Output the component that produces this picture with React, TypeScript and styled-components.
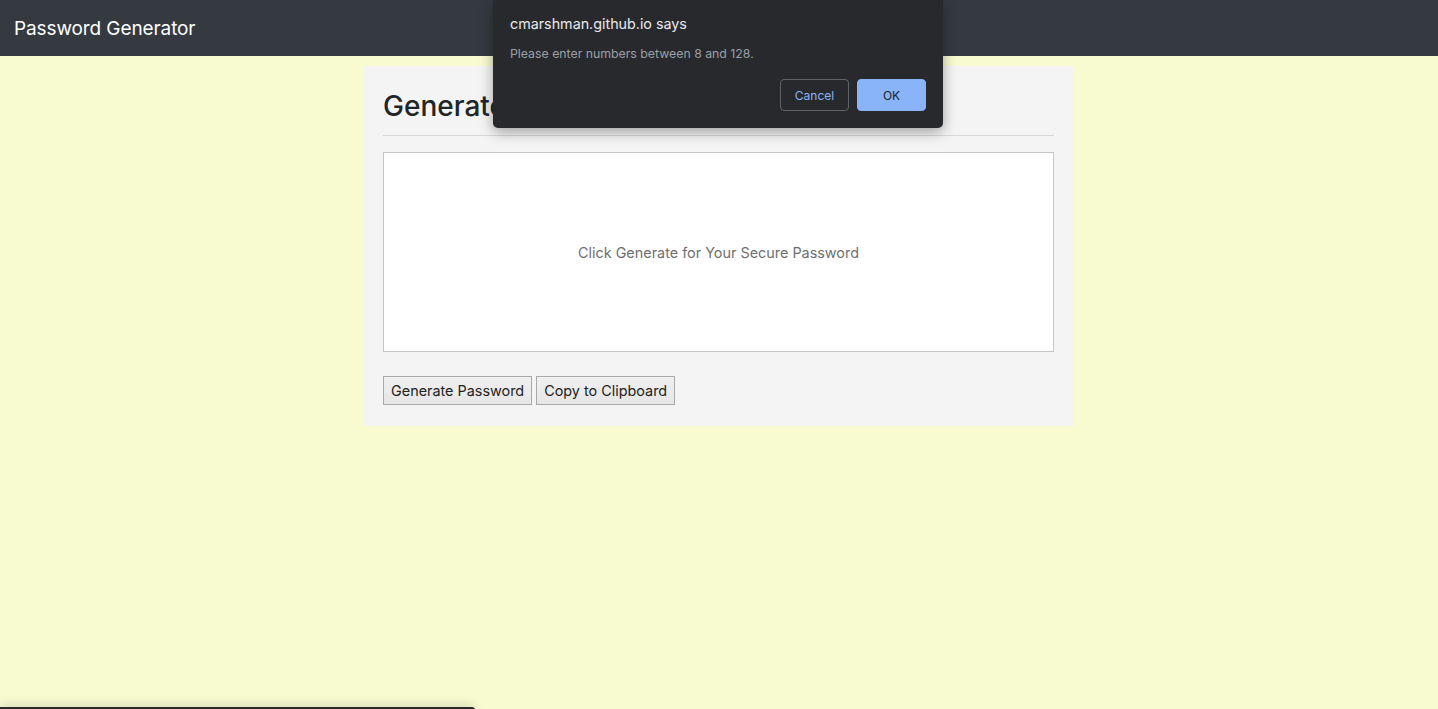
import React from "react";
import styled, { createGlobalStyle } from "styled-components";

const GlobalStyle = createGlobalStyle`
  html, body {
    margin: 0;
    padding: 0;
    height: 100%;
  }
  body {
    background: #f8fad0;
    font-family: Inter, "Noto Sans", "Liberation Sans", sans-serif;
    color: #212529;
    overflow: hidden;
  }
`;

function App() {
  return (
    <>
      <GlobalStyle />
      <Page>
        <NavBar>
          <Brand>Password Generator</Brand>
        </NavBar>
        <Card>
          <Title>Generate a Password</Title>
          <Divider />
          <PasswordBox>
            <Placeholder>Click Generate for Your Secure Password</Placeholder>
          </PasswordBox>
          <ButtonRow>
            <Button>Generate Password</Button>
            <Button>Copy to Clipboard</Button>
          </ButtonRow>
        </Card>
        <Dialog>
          <DialogTitle>cmarshman.github.io says</DialogTitle>
          <DialogText>Please enter numbers between 8 and 128.</DialogText>
          <DialogActions>
            <DialogButton>Cancel</DialogButton>
            <DialogButton primary>OK</DialogButton>
          </DialogActions>
        </Dialog>
        <BottomBar />
      </Page>
    </>
  );
}

export default App;

const Page = styled.div`
  position: relative;
  width: 100%;
  height: 709px;
  display: flex;
  flex-direction: column;
  align-items: center;
`;

const NavBar = styled.nav`
  align-self: stretch;
  height: 56px;
  background: #343a40;
  display: flex;
  align-items: center;
  padding: 0 14px;
`;

const Brand = styled.span`
  color: #ffffff;
  font-size: 19px;
  letter-spacing: -0.1px;
`;

const Card = styled.main`
  width: 710px;
  box-sizing: border-box;
  margin-top: 10px;
  padding: 20px 20px 21px 19px;
  background: #f4f4f4;
  display: flex;
  flex-direction: column;
`;

const Title = styled.h2`
  margin: 3px 0 0;
  font-size: 28px;
  font-weight: 500;
  line-height: 34px;
  color: #212529;
`;

const Divider = styled.hr`
  width: 100%;
  margin: 12px 0 16px;
  border: none;
  border-top: 1px solid #d8d8d8;
`;

const PasswordBox = styled.div`
  height: 200px;
  box-sizing: border-box;
  background: #ffffff;
  border: 1px solid #c6c6c6;
  display: flex;
  align-items: center;
  justify-content: center;
`;

const Placeholder = styled.span`
  color: #6f6f6f;
  font-size: 14.4px;
`;

const ButtonRow = styled.div`
  display: flex;
  gap: 4px;
  margin-top: 24px;
`;

const Button = styled.button`
  height: 29px;
  padding: 0 7px;
  font-family: inherit;
  font-size: 14.4px;
  color: #222222;
  background: linear-gradient(#f0f0f0, #e6e6e6);
  border: 1px solid #a9a9a9;
  border-radius: 0;
`;

const Dialog = styled.div`
  position: absolute;
  top: 0;
  left: 493px;
  width: 450px;
  height: 128px;
  box-sizing: border-box;
  padding: 14px 17px 17px;
  background: #28292d;
  border-radius: 0 0 5px 5px;
  box-shadow: 0 4px 14px rgba(0, 0, 0, 0.35);
  display: flex;
  flex-direction: column;
`;

const DialogTitle = styled.div`
  color: #e8eaed;
  font-size: 14.3px;
  line-height: 20px;
`;

const DialogText = styled.div`
  margin-top: 12px;
  color: #9aa0a6;
  font-size: 12.3px;
  line-height: 16px;
`;

const DialogActions = styled.div`
  margin-top: auto;
  display: flex;
  justify-content: flex-end;
  gap: 8px;
`;

const DialogButton = styled.button<{ primary?: boolean }>`
  width: 69px;
  height: 32px;
  font-family: inherit;
  font-size: 12px;
  border-radius: 4px;
  border: 1px solid ${(p) => (p.primary ? "#8ab4f8" : "#5f6368")};
  background: ${(p) => (p.primary ? "#8ab4f8" : "transparent")};
  color: ${(p) => (p.primary ? "#202124" : "#8ab4f8")};
`;

const BottomBar = styled.div`
  position: absolute;
  left: 0;
  bottom: -1px;
  width: 475px;
  height: 3px;
  background: #2b2b2b;
  border-radius: 0 3px 0 0;
  box-shadow: 0 -2px 8px rgba(0, 0, 0, 0.25);
`;
